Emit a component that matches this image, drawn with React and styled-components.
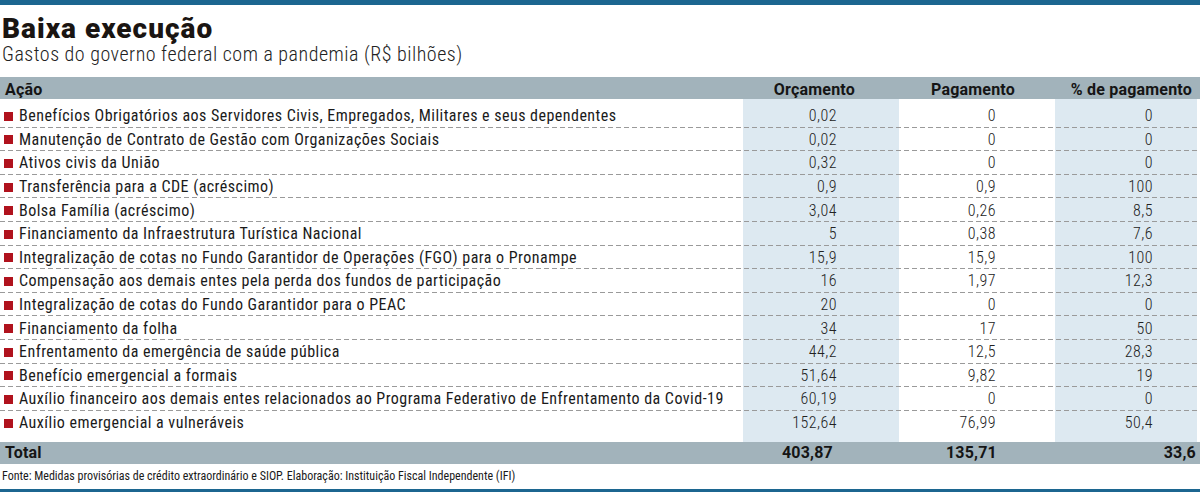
import React from 'react';
import styled, { createGlobalStyle } from 'styled-components';

const GlobalStyle = createGlobalStyle`
  html, body {
    margin: 0;
    padding: 0;
    background: #fff;
  }
  body {
    font-family: Roboto, "Liberation Sans", sans-serif;
    color: #1b1b1b;
  }
`;

const rows = [
  ['Benefícios Obrigatórios aos Servidores Civis, Empregados, Militares e seus dependentes', '0,02', '0', '0'],
  ['Manutenção de Contrato de Gestão com Organizações Sociais', '0,02', '0', '0'],
  ['Ativos civis da União', '0,32', '0', '0'],
  ['Transferência para a CDE (acréscimo)', '0,9', '0,9', '100'],
  ['Bolsa Família (acréscimo)', '3,04', '0,26', '8,5'],
  ['Financiamento da Infraestrutura Turística Nacional', '5', '0,38', '7,6'],
  ['Integralização de cotas no Fundo Garantidor de Operações (FGO) para o Pronampe', '15,9', '15,9', '100'],
  ['Compensação aos demais entes pela perda dos fundos de participação', '16', '1,97', '12,3'],
  ['Integralização de cotas do Fundo Garantidor para o PEAC', '20', '0', '0'],
  ['Financiamento da folha', '34', '17', '50'],
  ['Enfrentamento da emergência de saúde pública', '44,2', '12,5', '28,3'],
  ['Benefício emergencial a formais', '51,64', '9,82', '19'],
  ['Auxílio financeiro aos demais entes relacionados ao Programa Federativo de Enfrentamento da Covid-19', '60,19', '0', '0'],
  ['Auxílio emergencial a vulneráveis', '152,64', '76,99', '50,4'],
];

// action | orçamento | pagamento | % de pagamento | right gutter
const COLS = '743px 156px 156px 142px 3px';

const Page = styled.div`
  width: 1200px;
  height: 493px;
  display: flex;
  flex-direction: column;
  overflow: hidden;
`;

const Rule = styled.div`
  height: ${(p) => p.$h}px;
  background: #1c6690;
  flex: none;
`;

const Heading = styled.header`
  padding: 9px 0 0 2px;
  height: 72px;
  box-sizing: border-box;
  flex: none;
`;

const Title = styled.h1`
  margin: 0;
  font-size: 28px;
  line-height: 30px;
  font-weight: 900;
  letter-spacing: 1px;
  color: #1a1512;
`;

const Subtitle = styled.p`
  margin: 0;
  font-size: 20px;
  line-height: 20px;
  font-weight: 300;
  font-stretch: 87%;
  letter-spacing: 0.5px;
  color: #222;
`;

const Band = styled.div`
  display: grid;
  grid-template-columns: ${COLS};
  box-sizing: border-box;
  height: 22px;
  padding-top: ${(p) => p.$pt || 0}px;
  background: #a2b3bb;
  font-size: 16px;
  line-height: 22px;
  font-weight: 700;
  letter-spacing: 0.2px;
  color: #151515;
  flex: none;
`;

const BandCell = styled.div`
  text-align: ${(p) => (p.$left ? 'left' : 'right')};
  padding: ${(p) => (p.$left ? '0 0 0 5px' : `0 ${p.$pr}px 0 0`)};
  white-space: nowrap;
`;

const Body = styled.div`
  padding: 5px 0 8px;
  flex: none;
  background: linear-gradient(
    to right,
    transparent 743px,
    #dde9f1 743px 899px,
    transparent 899px 1055px,
    #dde9f1 1055px 1197px,
    transparent 1197px
  );
`;

const Row = styled.div`
  display: grid;
  grid-template-columns: ${COLS};
  align-items: center;
  height: 23.6px;
  font-size: 16px;
  font-stretch: 87%;
  letter-spacing: 0.47px;
  background: ${(p) =>
    p.$last
      ? 'none'
      : 'repeating-linear-gradient(to right, #9a9a9a 0 5px, transparent 5px 8px) left bottom / 1197px 1px no-repeat'};
`;

const Label = styled.div`
  display: flex;
  align-items: center;
  gap: 6px;
  padding-left: 4px;
  white-space: nowrap;
  color: #1a1a1a;
`;

const Bullet = styled.span`
  width: 9px;
  height: 9px;
  background: #b0121d;
  flex: none;
  margin-top: 1px;
`;

const Num = styled.div`
  text-align: right;
  padding-right: ${(p) => p.$pr}px;
  font-weight: 300;
  color: #222;
`;

const Footer = styled.div`
  padding: 5px 0 0 2px;
  height: 25px;
  box-sizing: border-box;
  font-size: 12px;
  font-stretch: 82%;
  color: #1a1a1a;
  flex: none;
`;

export default function App() {
  return (
    <>
      <GlobalStyle />
      <Page>
        <Rule $h={5} />
        <Heading>
          <Title>Baixa execução</Title>
          <Subtitle>Gastos do governo federal com a pandemia (R$ bilhões)</Subtitle>
        </Heading>
        <Band $pt={2}>
          <BandCell $left>Ação</BandCell>
          <BandCell $pr={44}>Orçamento</BandCell>
          <BandCell $pr={40}>Pagamento</BandCell>
          <BandCell $pr={5}>% de pagamento</BandCell>
          <span />
        </Band>
        <Body>
          {rows.map(([label, a, b, c], i) => (
            <Row key={label} $last={i === rows.length - 1}>
              <Label>
                <Bullet />
                {label}
              </Label>
              <Num $pr={62}>{a}</Num>
              <Num $pr={59}>{b}</Num>
              <Num $pr={44}>{c}</Num>
              <span />
            </Row>
          ))}
        </Body>
        <Band>
          <BandCell $left>Total</BandCell>
          <BandCell $pr={66}>403,87</BandCell>
          <BandCell $pr={58}>135,71</BandCell>
          <BandCell $pr={1}>33,6</BandCell>
          <span />
        </Band>
        <Footer>
          Fonte: Medidas provisórias de crédito extraordinário e SIOP. Elaboração: Instituição Fiscal Independente (IFI)
        </Footer>
        <Rule $h={3} />
      </Page>
    </>
  );
}
